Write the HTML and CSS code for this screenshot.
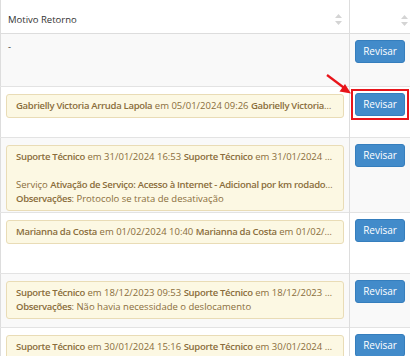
FILE: index.html
```html
<!DOCTYPE html>
<html lang="pt-BR">
<head>
    <meta charset="UTF-8">
    <title>Motivo Retorno</title>
    <link rel="stylesheet" href="styles.css">
</head>
<body>
<div class="page">
    <table class="grid">
        <colgroup>
            <col class="col-motivo">
            <col class="col-acao">
        </colgroup>
        <thead>
        <tr>
            <th>
                <div class="th-inner">
                    <span>Motivo Retorno</span>
                    <svg class="sort" width="7" height="11" viewBox="0 0 7 11"><path d="M3.5 0L7 4H0z M3.5 11L0 7h7z" fill="#d4d4d4"/></svg>
                </div>
            </th>
            <th>
                <div class="th-inner th-end">
                    <svg class="sort" width="7" height="11" viewBox="0 0 7 11"><path d="M3.5 0L7 4H0z M3.5 11L0 7h7z" fill="#d4d4d4"/></svg>
                </div>
            </th>
        </tr>
        </thead>
        <tbody>
        <tr class="odd r1">
            <td><div class="plain">-</div></td>
            <td><button type="button" class="btn">Revisar</button></td>
        </tr>
        <tr class="r2">
            <td>
                <div class="alert">
                    <div class="line"><b>Gabrielly Victoria Arruda Lapola</b> em 05/01/2024 09:26 <b>Gabrielly Victoria Arruda Lapola</b> em 05/01/2024 09:26</div>
                </div>
            </td>
            <td class="cell-marked">
                <div class="marked">
                    <button type="button" class="btn">Revisar</button>
                    <svg class="pointer" width="26" height="22" viewBox="0 0 26 22"><path d="M1 1L19 14.5" stroke="#e8141a" stroke-width="2.2" fill="none"/><path d="M25 19.5L13.5 17.5L19 10z" fill="#e8141a"/></svg>
                </div>
            </td>
        </tr>
        <tr class="odd r3">
            <td>
                <div class="alert">
                    <div class="line"><b>Suporte Técnico</b> em 31/01/2024 16:53 <b>Suporte Técnico</b> em 31/01/2024 16:53</div>
                    <div class="line blank"></div>
                    <div class="line">Serviço <b>Ativação de Serviço: Acesso à Internet - Adicional por km rodado (Manutenção)</b></div>
                    <div class="line"><b>Observações</b>: Protocolo se trata de desativação</div>
                </div>
            </td>
            <td><button type="button" class="btn">Revisar</button></td>
        </tr>
        <tr class="r4">
            <td>
                <div class="alert">
                    <div class="line"><b>Marianna da Costa</b> em 01/02/2024 10:40 <b>Marianna da Costa</b> em 01/02/2024 10:40</div>
                </div>
            </td>
            <td><button type="button" class="btn">Revisar</button></td>
        </tr>
        <tr class="odd r5">
            <td>
                <div class="alert">
                    <div class="line"><b>Suporte Técnico</b> em 18/12/2023 09:53 <b>Suporte Técnico</b> em 18/12/2023 09:53</div>
                    <div class="line"><b>Observações</b>: Não havia necessidade o deslocamento</div>
                </div>
            </td>
            <td><button type="button" class="btn">Revisar</button></td>
        </tr>
        <tr class="r6">
            <td>
                <div class="alert">
                    <div class="line"><b>Suporte Técnico</b> em 30/01/2024 15:16 <b>Suporte Técnico</b> em 30/01/2024 15:16</div>
                    <div class="line"><b>Observações</b>: Cliente ausente no local</div>
                </div>
            </td>
            <td><button type="button" class="btn">Revisar</button></td>
        </tr>
        </tbody>
    </table>
</div>
</body>
</html>
```

FILE: styles.css
```css
*{
    margin: 0;
    padding: 0;
    box-sizing: border-box;
}
body{
    background: #ffffff;
    font-family: "Open Sans", "Liberation Sans", sans-serif;
    font-size: 9.5px;
    color: #333333;
    overflow: hidden;
}

.page{
    width: 410px;
}

.grid{
    width: 410px;
    table-layout: fixed;
    border-collapse: collapse;
    border-left: 1px solid #dddddd;
    border-right: 1px solid #dddddd;
}
.grid .col-motivo{
    width: 349px;
}
.grid .col-acao{
    width: 61px;
}
.grid th{
    height: 33px;
    padding: 0 7px 0 7px;
    font-weight: normal;
    text-align: left;
    border-bottom: 1px solid #dddddd;
    vertical-align: bottom;
}
.grid th + th{
    border-left: 1px solid #dddddd;
}
.th-inner{
    display: flex;
    justify-content: space-between;
    align-items: center;
    padding-bottom: 7px;
}
.th-end{
    justify-content: flex-end;
}
.grid th:last-child{
    padding-right: 2px;
}
.sort{
    display: block;
}

.grid td{
    padding: 6px 5px 0 5px;
    vertical-align: top;
    border-top: 1px solid #e3e3e3;
    overflow: hidden;
}
.grid td + td{
    border-left: 1px solid #dddddd;
    padding-left: 5px;
    padding-right: 3px;
}
.grid td.cell-marked{
    overflow: visible;
}
.grid tr.odd td{
    background: #f9f9f9;
}
.r1 td{ height: 53px; }
.r2 td{ height: 51px; }
.r3 td{ height: 75px; }
.r4 td{ height: 61px; }
.r5 td{ height: 54px; }
.r6 td{ height: 54px; }

.plain{
    padding-left: 2px;
    line-height: 14px;
}

.alert{
    background: #fcf8e3;
    border: 1px solid #e9dcb6;
    border-radius: 3px;
    color: #8a6d3b;
    padding: 4px 10px 4px 9px;
    margin-top: 1px;
}
.alert .line{
    line-height: 14px;
    white-space: nowrap;
    overflow: hidden;
    text-overflow: ellipsis;
}
.alert .blank{
    height: 14px;
}
.alert b{
    font-weight: 600;
    letter-spacing: -0.3px;
}

.btn{
    display: block;
    width: 50px;
    height: 23px;
    background: #428bca;
    border: 1px solid #357ebd;
    border-radius: 3px;
    color: #ffffff;
    font-family: "Open Sans", "Liberation Sans", sans-serif;
    font-size: 10px;
    outline: none;
}

.marked{
    position: relative;
    width: 50px;
}
.marked:before{
    content: '';
    position: absolute;
    left: -4px;
    top: -4px;
    right: -4px;
    bottom: -4px;
    border: 2px solid #e8141a;
}
.marked .pointer{
    position: absolute;
    left: -29px;
    top: -19px;
}
```
